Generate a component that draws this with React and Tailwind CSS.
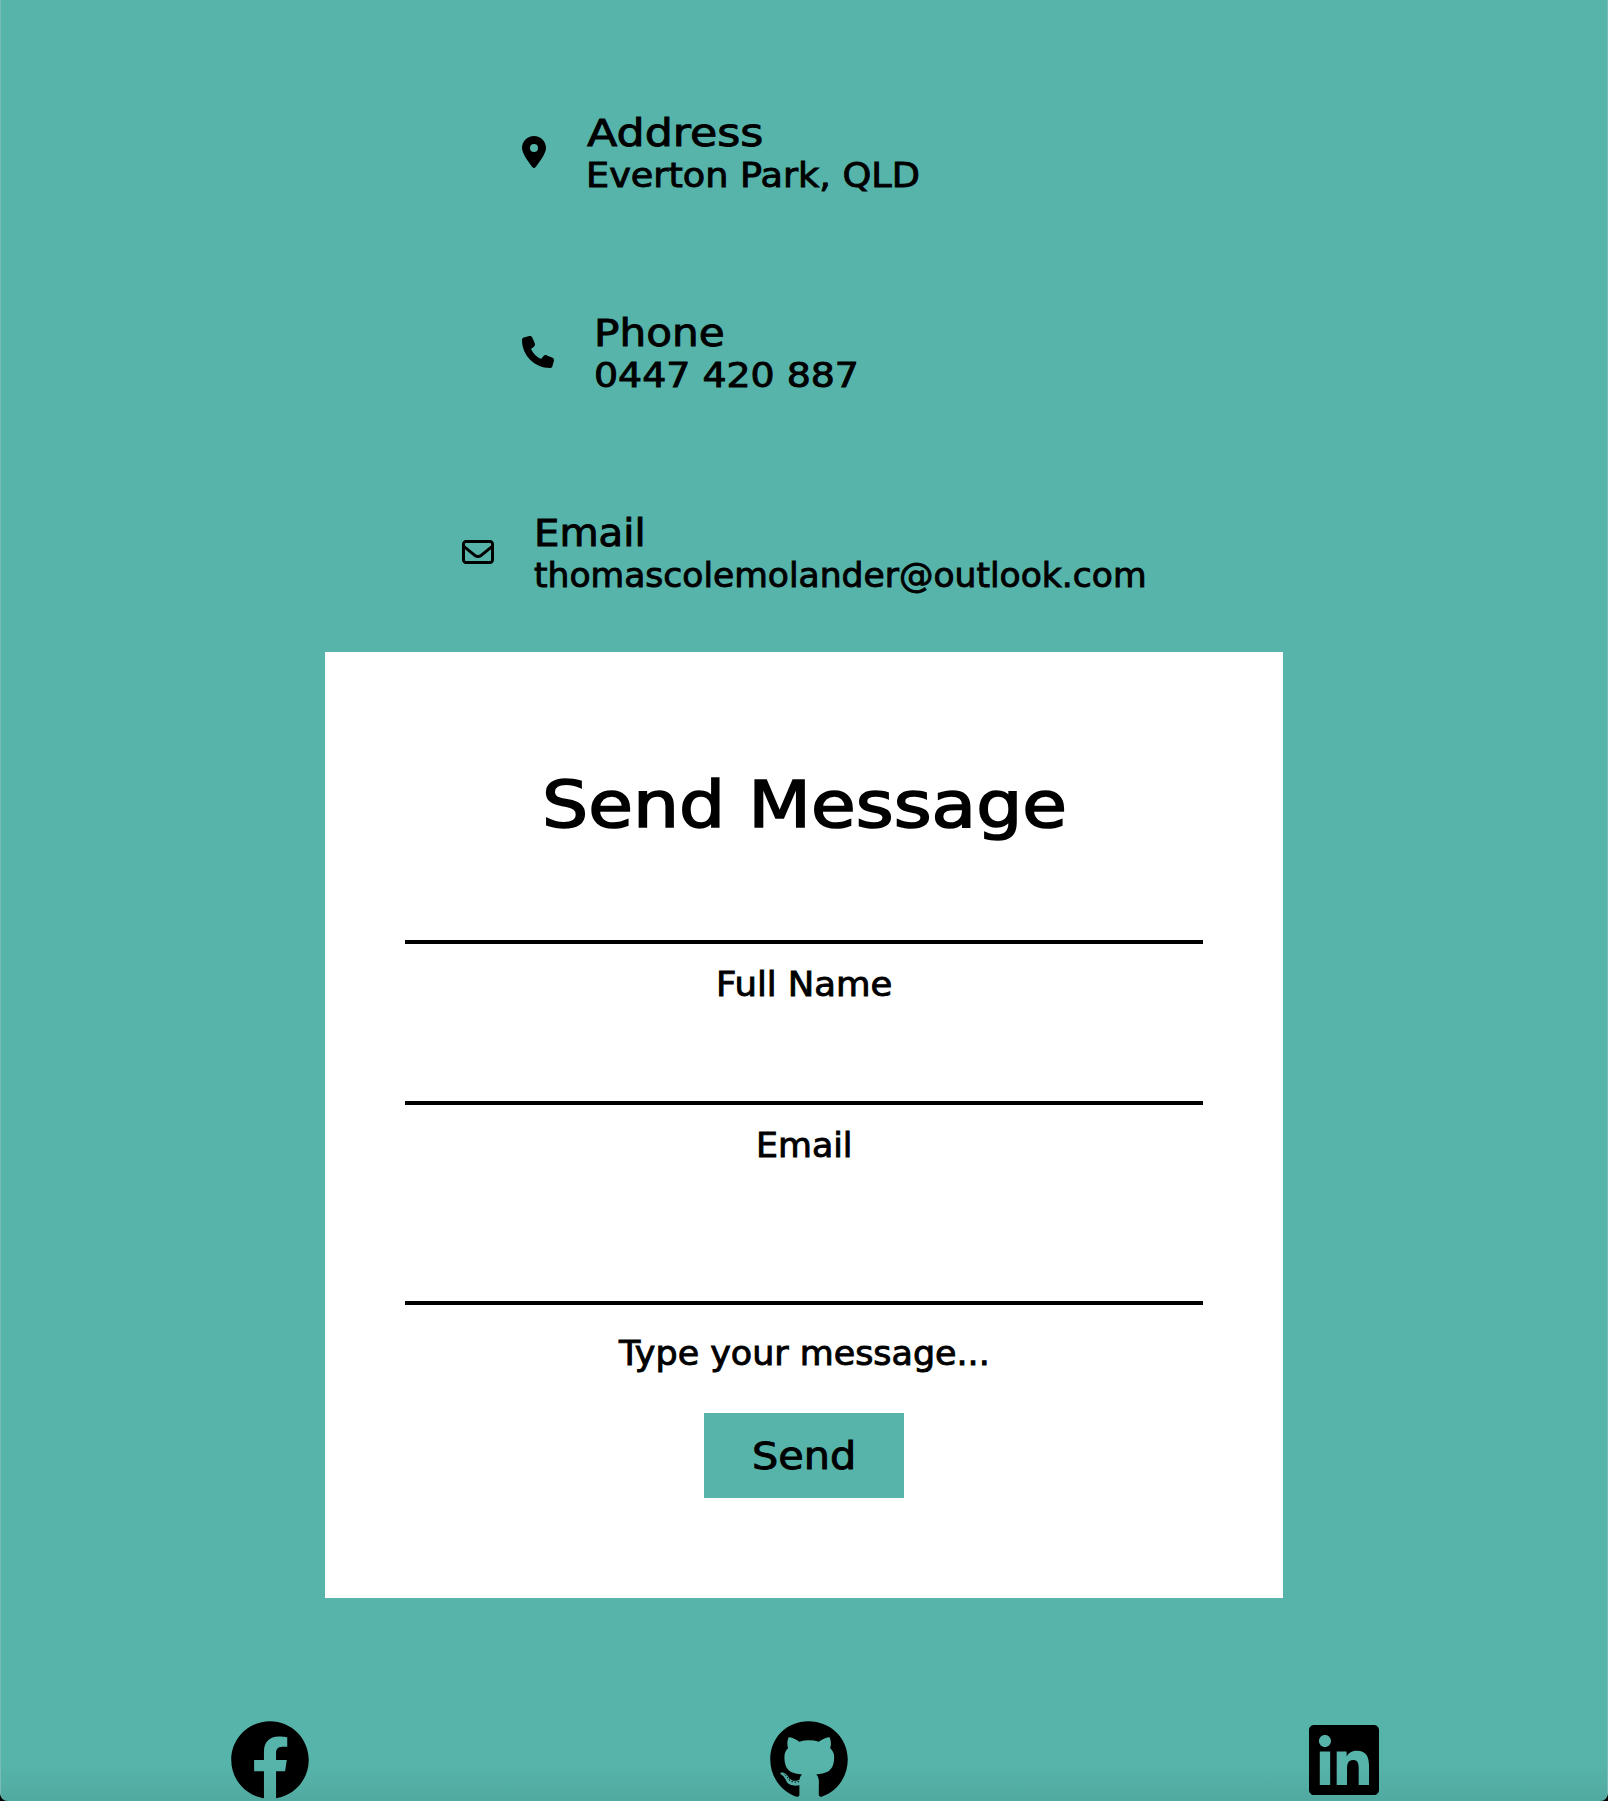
import { useLayoutEffect, useRef, useState } from "react";
import { FaLocationDot, FaPhone, FaRegEnvelope } from "react-icons/fa6";
import { FaFacebook, FaGithub, FaLinkedin } from "react-icons/fa";

// Stretches a single line of text so that it fills the given width.
function Fit({ width, className = "", children }) {
  const ref = useRef(null);
  const [scale, setScale] = useState(1);
  useLayoutEffect(() => {
    setScale(width / ref.current.offsetWidth);
  }, [width]);
  return (
    <span className={`block text-left whitespace-nowrap ${className}`} style={{ width }}>
      <span
        ref={ref}
        className="inline-block origin-left align-top"
        style={{ transform: `scaleX(${scale})` }}
      >
        {children}
      </span>
    </span>
  );
}

function Contact({ icon, title, titleWidth, text, textWidth, titleClass = "", textClass = "", className }) {
  return (
    <div className={`flex h-[86px] items-start ${className}`}>
      <span className="mt-[26px] shrink-0">{icon}</span>
      <div className="[-webkit-text-stroke:0.9px_black]">
        <Fit width={titleWidth} className={`pt-px text-[37px] leading-[45px] ${titleClass}`}>{title}</Fit>
        <Fit width={textWidth} className={`text-[33px] leading-10 ${textClass}`}>{text}</Fit>
      </div>
    </div>
  );
}

export default function App() {
  return (
    <div className="h-[1801px] w-[1608px] overflow-hidden bg-black">
      <main className="flex h-full flex-col overflow-hidden rounded-b-[8px] border-x border-[#77bdb6] bg-[#56b4aa] bg-[linear-gradient(to_bottom,transparent_1765px,rgba(0,0,0,0.06)_1801px)] pt-[110px] font-['DejaVu_Sans',sans-serif] text-black">
        <section className="flex flex-col gap-[114px]">
          <Contact
            className="ml-[521px] gap-[39px]"
            icon={<FaLocationDot className="h-8 w-6" />}
            title="Address" titleWidth={176} titleClass="ml-[2px]"
            text="Everton Park, QLD" textWidth={334} textClass="ml-[1px]"
          />
          <Contact
            className="ml-[521px] gap-[39px]"
            icon={<FaPhone className="size-8" />}
            title="Phone" titleWidth={131} titleClass="ml-[1px]"
            text="0447 420 887" textWidth={265} textClass="ml-[1px]"
          />
          <Contact
            className="ml-[461px] gap-[38px]"
            icon={<FaRegEnvelope className="size-8" />}
            title="Email" titleWidth={112} titleClass="ml-[2px]"
            text="thomascolemolander@outlook.com" textWidth={613} textClass="ml-[2px]"
          />
        </section>

        <form className="mx-auto mt-[56px] flex h-[946px] w-[958px] shrink-0 flex-col items-center bg-white px-20 pt-[113px] [-webkit-text-stroke:0.9px_black]">
          <h1 className="h-20 text-[64px] leading-20 [-webkit-text-stroke:1.7px_black]">
            <Fit width={525}>Send Message</Fit>
          </h1>
          <div className="mt-[95px] h-1 w-full bg-black" />
          <label className="mt-[21px] text-[33px] leading-10"><Fit width={176}>Full Name</Fit></label>
          <div className="mt-[96px] h-1 w-full bg-black" />
          <label className="mt-[21px] text-[33px] leading-10"><Fit width={97}>Email</Fit></label>
          <div className="mt-[135px] h-1 w-full bg-black" />
          <label className="mt-[29px] text-[33px] leading-10"><Fit width={371}>Type your message...</Fit></label>
          <button type="button" className="mt-[39px] flex h-[85px] w-[200px] items-center justify-center bg-[#56b4aa] pt-[2px] text-[37px] leading-[46px]">
            <Fit width={104}>Send</Fit>
          </button>
        </form>

        <footer className="mt-[122px] flex h-20 shrink-0 justify-between px-[228.5px]">
          <FaFacebook className="size-20" />
          <FaGithub className="h-20 w-[78px]" />
          <FaLinkedin className="h-20 w-[70px]" />
        </footer>
      </main>
    </div>
  );
}
